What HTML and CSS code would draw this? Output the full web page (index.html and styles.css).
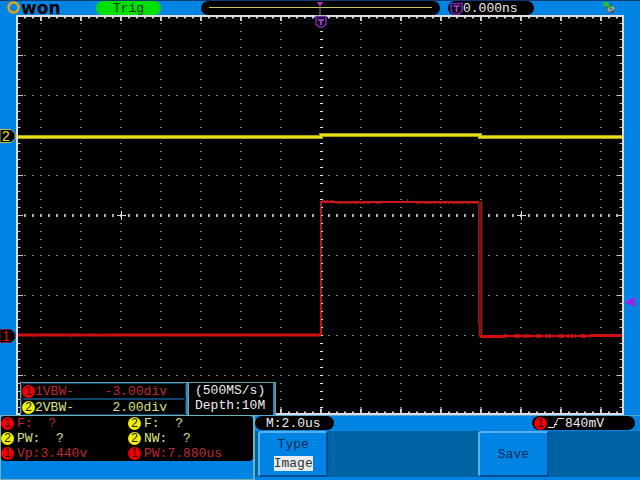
FILE: index.html
```html
<!DOCTYPE html>
<html lang="en">
<head>
    <meta charset="UTF-8">
    <title>OWON</title>
    <link rel="stylesheet" href="styles.css">
</head>
<body>
<div class="screen">
    <header class="top">
        <div class="logo">
            <svg width="14" height="14" viewBox="0 0 14 14"><circle cx="6.500" cy="6.500" r="5" fill="none" stroke="#e0a420" stroke-width="2.500"/></svg>
            <span>won</span>
        </div>
        <div class="state">Trig</div>
        <div class="memory">
            <svg width="100%" height="14" viewBox="0 0 240 14" preserveAspectRatio="none">
                <path d="M8 6.500H232" stroke="#c8c860"/>
                <path d="M119.500 3V14" stroke="#a080a0"/>
                <path d="M117 1h5v2h-1v1h-3v-1h-1z" fill="#d020d0"/>
            </svg>
        </div>
        <div class="pill offset">
            <svg width="13" height="13" viewBox="0 0 13 13"><path d="M1 1.500H12V9L9 12H4L1 9Z" fill="#100018" stroke="#7a2ab0" stroke-width="1.500"/><path d="M3.500 4H9.500M6.500 4V10" stroke="#a050d8" stroke-width="1.500"/></svg>
            <span>0.000ns</span>
        </div>
        <svg class="usb" width="14" height="13" viewBox="0 0 14 13">
            <path d="M2 6L8 3L12 7L11 12L6 12Z" fill="#405868"/>
            <path d="M4 8L10 5L12 8L6 11Z" fill="#b0b8b8"/>
            <path d="M6 9L10 7" stroke="#405060"/>
            <path d="M0 1H6L5 3L9 6L7 8L3 5L1 6Z" fill="#30b830"/>
        </svg>
    </header>

    <main class="display">
        <svg class="plot" viewBox="0 15 640 400" preserveAspectRatio="none">
            <defs>
                <path id="col" d="M0 23V412"/>
                <path id="row" d="M24 0H620"/>
            </defs>
            <rect x="17" y="16" width="606" height="398" fill="#000"/>
            <!-- grid -->
            <g stroke="#808080" stroke-width="2" stroke-dasharray="1 7">
                <use href="#col" x="41"/><use href="#col" x="81"/><use href="#col" x="121"/><use href="#col" x="161"/>
                <use href="#col" x="201"/><use href="#col" x="241"/><use href="#col" x="281"/><use href="#col" x="361"/>
                <use href="#col" x="401"/><use href="#col" x="441"/><use href="#col" x="481"/><use href="#col" x="521"/>
                <use href="#col" x="561"/><use href="#col" x="601"/>
            </g>
            <g stroke="#808080" stroke-dasharray="2 6">
                <use href="#row" y="55.500"/><use href="#row" y="95.500"/><use href="#row" y="135.500"/><use href="#row" y="175.500"/>
                <use href="#row" y="255.500"/><use href="#row" y="295.500"/><use href="#row" y="335.500"/><use href="#row" y="375.500"/>
            </g>
            <path d="M321.500 23V412" stroke="#e0e0e0" stroke-width="3" stroke-dasharray="1 7"/>
            <path d="M24 215.500H620" stroke="#b0b0b0" stroke-width="3" stroke-dasharray="2 6"/>
            <path d="M117 215.500H126M121.500 211V220M517 215.500H526M521.500 211V220" stroke="#ddd"/>
            <!-- edge ticks -->
            <g stroke="#ccc" fill="none">
                <path d="M19 23V413M621 23V413" stroke-width="3" stroke-dasharray="1 7"/>
                <path d="M20.500 55V413M619.500 55V413" stroke-width="5" stroke-dasharray="1 39"/>
                <path d="M24 17.500H620M24 412.500H620" stroke-width="2" stroke-dasharray="2 6"/>
                <path d="M40 18.500H620M40 411H620" stroke-width="5" stroke-dasharray="2 38"/>
            </g>
            <rect x="17" y="16" width="606" height="398" fill="none" stroke="#dcdce4" stroke-width="2"/>
            <!-- channel 2 -->
            <path d="M18 137H321V135H480V137H622" fill="none" stroke="#a8a010" stroke-width="4"/>
            <path d="M18 137H321V135H480V137H622" fill="none" stroke="#e8e010" stroke-width="2"/>
            <!-- channel 1 -->
            <g fill="none" stroke="#d01010">
                <path d="M18 335H321" stroke-width="3"/>
                <path d="M321 335V201" stroke="#a82020" stroke-width="2"/>
                <path d="M321 335V295" stroke-width="2"/>
                <path d="M321.500 207V335" stroke="#e0b0b0" stroke-dasharray="1 7"/>
                <path d="M321 202H480" stroke="#c81818" stroke-width="2"/>
                <path d="M322 200.500H333M337 203.500H343M345 203.500H370M376 203.500H384M416 203.500H480" stroke="#980c0c" stroke-dasharray="3 1 2 2 5 1"/>
                <path d="M407.500 199V202"/>
                <path d="M480.500 201V336" stroke="#681414" stroke-width="4"/>
                <path d="M478.500 201V324M479.500 324V337M481.500 203V337" stroke="#901c1c"/>
                <path d="M480 336.500H504" stroke-width="3"/>
                <path d="M504 336H590" stroke-width="2"/>
                <path d="M504 334.500H590M504 337.500H590" stroke="#a01010" stroke-dasharray="3 2 1 4 6 3 2 1"/>
                <path d="M590 335.500H622" stroke-width="3"/>
                <path d="M33.500 335V339M70.500 335V339" stroke="#801010"/>
                <path d="M83 333.500H116" stroke="#300" stroke-dasharray="2 2 1 8"/>
            </g>
            <!-- markers -->
            <path d="M0 129.500H11L15 133.500V138.500L11 142.500H0Z" fill="#000" stroke="#b8c050"/>
            <text class="mark" x="2" y="141" fill="#e8e040">2</text>
            <path d="M0 329.500H11L15 333.500V338.500L11 342.500H0Z" fill="#000" stroke="#801828"/>
            <text class="mark" x="2" y="341" fill="#e01010">1</text>
            <path d="M316 16.500H326V24L323 27H319L316 24Z" fill="#100018" stroke="#7a2ab0" stroke-width="1.500"/>
            <path d="M318 20H324M321 20V25" stroke="#b050e0" stroke-width="1.500"/>
            <path d="M624 302L635 297V307Z" fill="#a020e0"/>
        </svg>

        <div class="readout">
            <div class="channels">
                <div class="chan red"><i class="dot">1</i><span>1VBW-</span><span class="scale">-3.00div</span></div>
                <div class="chan yellow"><i class="dot">2</i><span>2VBW-</span><span class="scale">2.00div</span></div>
            </div>
            <div class="sampling">
                <div>(500MS/s)</div>
                <div>Depth:10M</div>
            </div>
        </div>
    </main>

    <footer class="bottom">
        <section class="measure">
            <ul>
                <li class="red"><i class="dot">1</i><pre>F:  ?</pre></li>
                <li class="yellow"><i class="dot">2</i><pre>F:  ?</pre></li>
                <li class="yellow"><i class="dot">2</i><pre>PW:  ?</pre></li>
                <li class="yellow"><i class="dot">2</i><pre>NW:  ?</pre></li>
                <li class="red"><i class="dot">1</i><pre>Vp:3.440v</pre></li>
                <li class="red"><i class="dot">1</i><pre>PW:7.880us</pre></li>
            </ul>
        </section>
        <section class="control">
            <div class="status">
                <div class="pill timebase">M:2.0us</div>
                <div class="pill trigger">
                    <i class="dot">1</i>
                    <svg width="16" height="12" viewBox="0 0 16 12"><path d="M0 10.500H6L10 1.500H16M6 7.500H9" fill="none" stroke="#eee"/></svg>
                    <span>840mV</span>
                </div>
            </div>
            <nav class="menu">
                <button class="type"><span>Type</span><span class="value">Image</span></button>
                <button class="save">Save</button>
            </nav>
        </section>
    </footer>
</div>
</body>
</html>
```

FILE: styles.css
```css
*{
    padding: 0;
    margin: 0;
    box-sizing: border-box;
}
body{
    background-color: #0084e4;
    font: 13px/15px "Liberation Mono", monospace;
    color: #eee;
}
.screen{
    min-height: 100vh;
    display: flex;
    flex-direction: column;
}
.top{
    height: 15px;
    display: flex;
    padding-left: 7px;
    border-top: 1px solid #103c70;
}
.logo{
    width: 89px;
    display: flex;
    font: bold 17px/14px "DejaVu Sans", sans-serif;
    color: #000;
}
.logo svg{
    flex: none;
}
.state{
    width: 65px;
    margin-right: 40px;
    border-radius: 7px;
    background-color: #00e000;
    color: #033803;
    text-align: center;
}
.memory{
    flex: 1;
    margin-right: 8px;
    border-radius: 7px;
    background-color: #000;
}
.memory svg{
    display: block;
}
.pill{
    display: flex;
    align-items: center;
    height: 14px;
    border-radius: 7px;
    background-color: #000;
}
.offset{
    width: 86px;
    padding-left: 2px;
}
.usb{
    margin-left: 69px;
    margin-right: 23px;
}
.display{
    flex: 1;
    position: relative;
}
.plot{
    display: block;
    width: 100%;
    height: 100%;
}
.mark{
    font: 14px "Liberation Sans", sans-serif;
}
.readout{
    position: absolute;
    left: 20px;
    bottom: 0;
    display: flex;
    background-color: #000;
    border: 1px solid #6a9ca4;
    border-bottom: 0;
}
.channels{
    width: 167px;
    border-right: 2px solid #3088b8;
}
.chan{
    display: flex;
    align-items: center;
    height: 16px;
    border: 1px solid #10446c;
    border-radius: 3px;
}
.scale{
    flex: 1;
    padding-right: 18px;
    text-align: right;
}
.sampling{
    padding: 0 8px 2px 6px;
    border-left: 1px solid #78a8a8;
    border-right: 2px solid #3088b8;
}
.red{
    color: #c02830;
}
.yellow{
    color: #dce088;
}
.dot{
    flex: none;
    width: 13px;
    height: 13px;
    border-radius: 50%;
    background-color: #f00000;
    color: #300;
    font: 12px/13px "Liberation Sans", sans-serif;
    text-align: center;
}
.yellow .dot{
    background-color: #f0f000;
    color: #220;
}
.bottom{
    height: 65px;
    display: flex;
}
.measure{
    width: 255px;
    border: 1px solid #70b0b8;
    border-right: 2px solid #70b0b8;
}
.measure ul{
    display: grid;
    grid-template-columns: 127px 1fr;
    list-style: none;
    background-color: #000;
    border-radius: 4px;
}
.measure li{
    display: flex;
    align-items: center;
    height: 15px;
    gap: 3px;
}
pre{
    font: 13px/15px "Liberation Mono", monospace;
}
.control{
    flex: 1;
    display: flex;
    flex-direction: column;
    border-top: 1px solid #50a8d0;
}
.status{
    display: flex;
    justify-content: space-between;
    height: 15px;
    padding-right: 5px;
}
.timebase{
    width: 79px;
    padding-left: 11px;
}
.trigger{
    width: 103px;
    padding-left: 2px;
    gap: 1px;
}
.menu{
    display: grid;
    grid-template-columns: repeat(5, 1fr);
    height: 46px;
    padding: 0 16px 0 2px;
    background-color: #0064a4;
}
.menu button{
    margin: 0 2px 0 1px;
    border: 2px solid #004c94;
    border-top-color: #58b0f0;
    border-left-color: #58b0f0;
    border-radius: 3px;
    background-color: #0084e4;
    color: #0c2c50;
    font: 13px/15px "Liberation Mono", monospace;
}
.type{
    display: flex;
    flex-direction: column;
    align-items: center;
    justify-content: center;
    gap: 4px;
}
.menu .value{
    background-color: #e8ecec;
    color: #333;
}
.save{
    grid-column: 4;
}
```
